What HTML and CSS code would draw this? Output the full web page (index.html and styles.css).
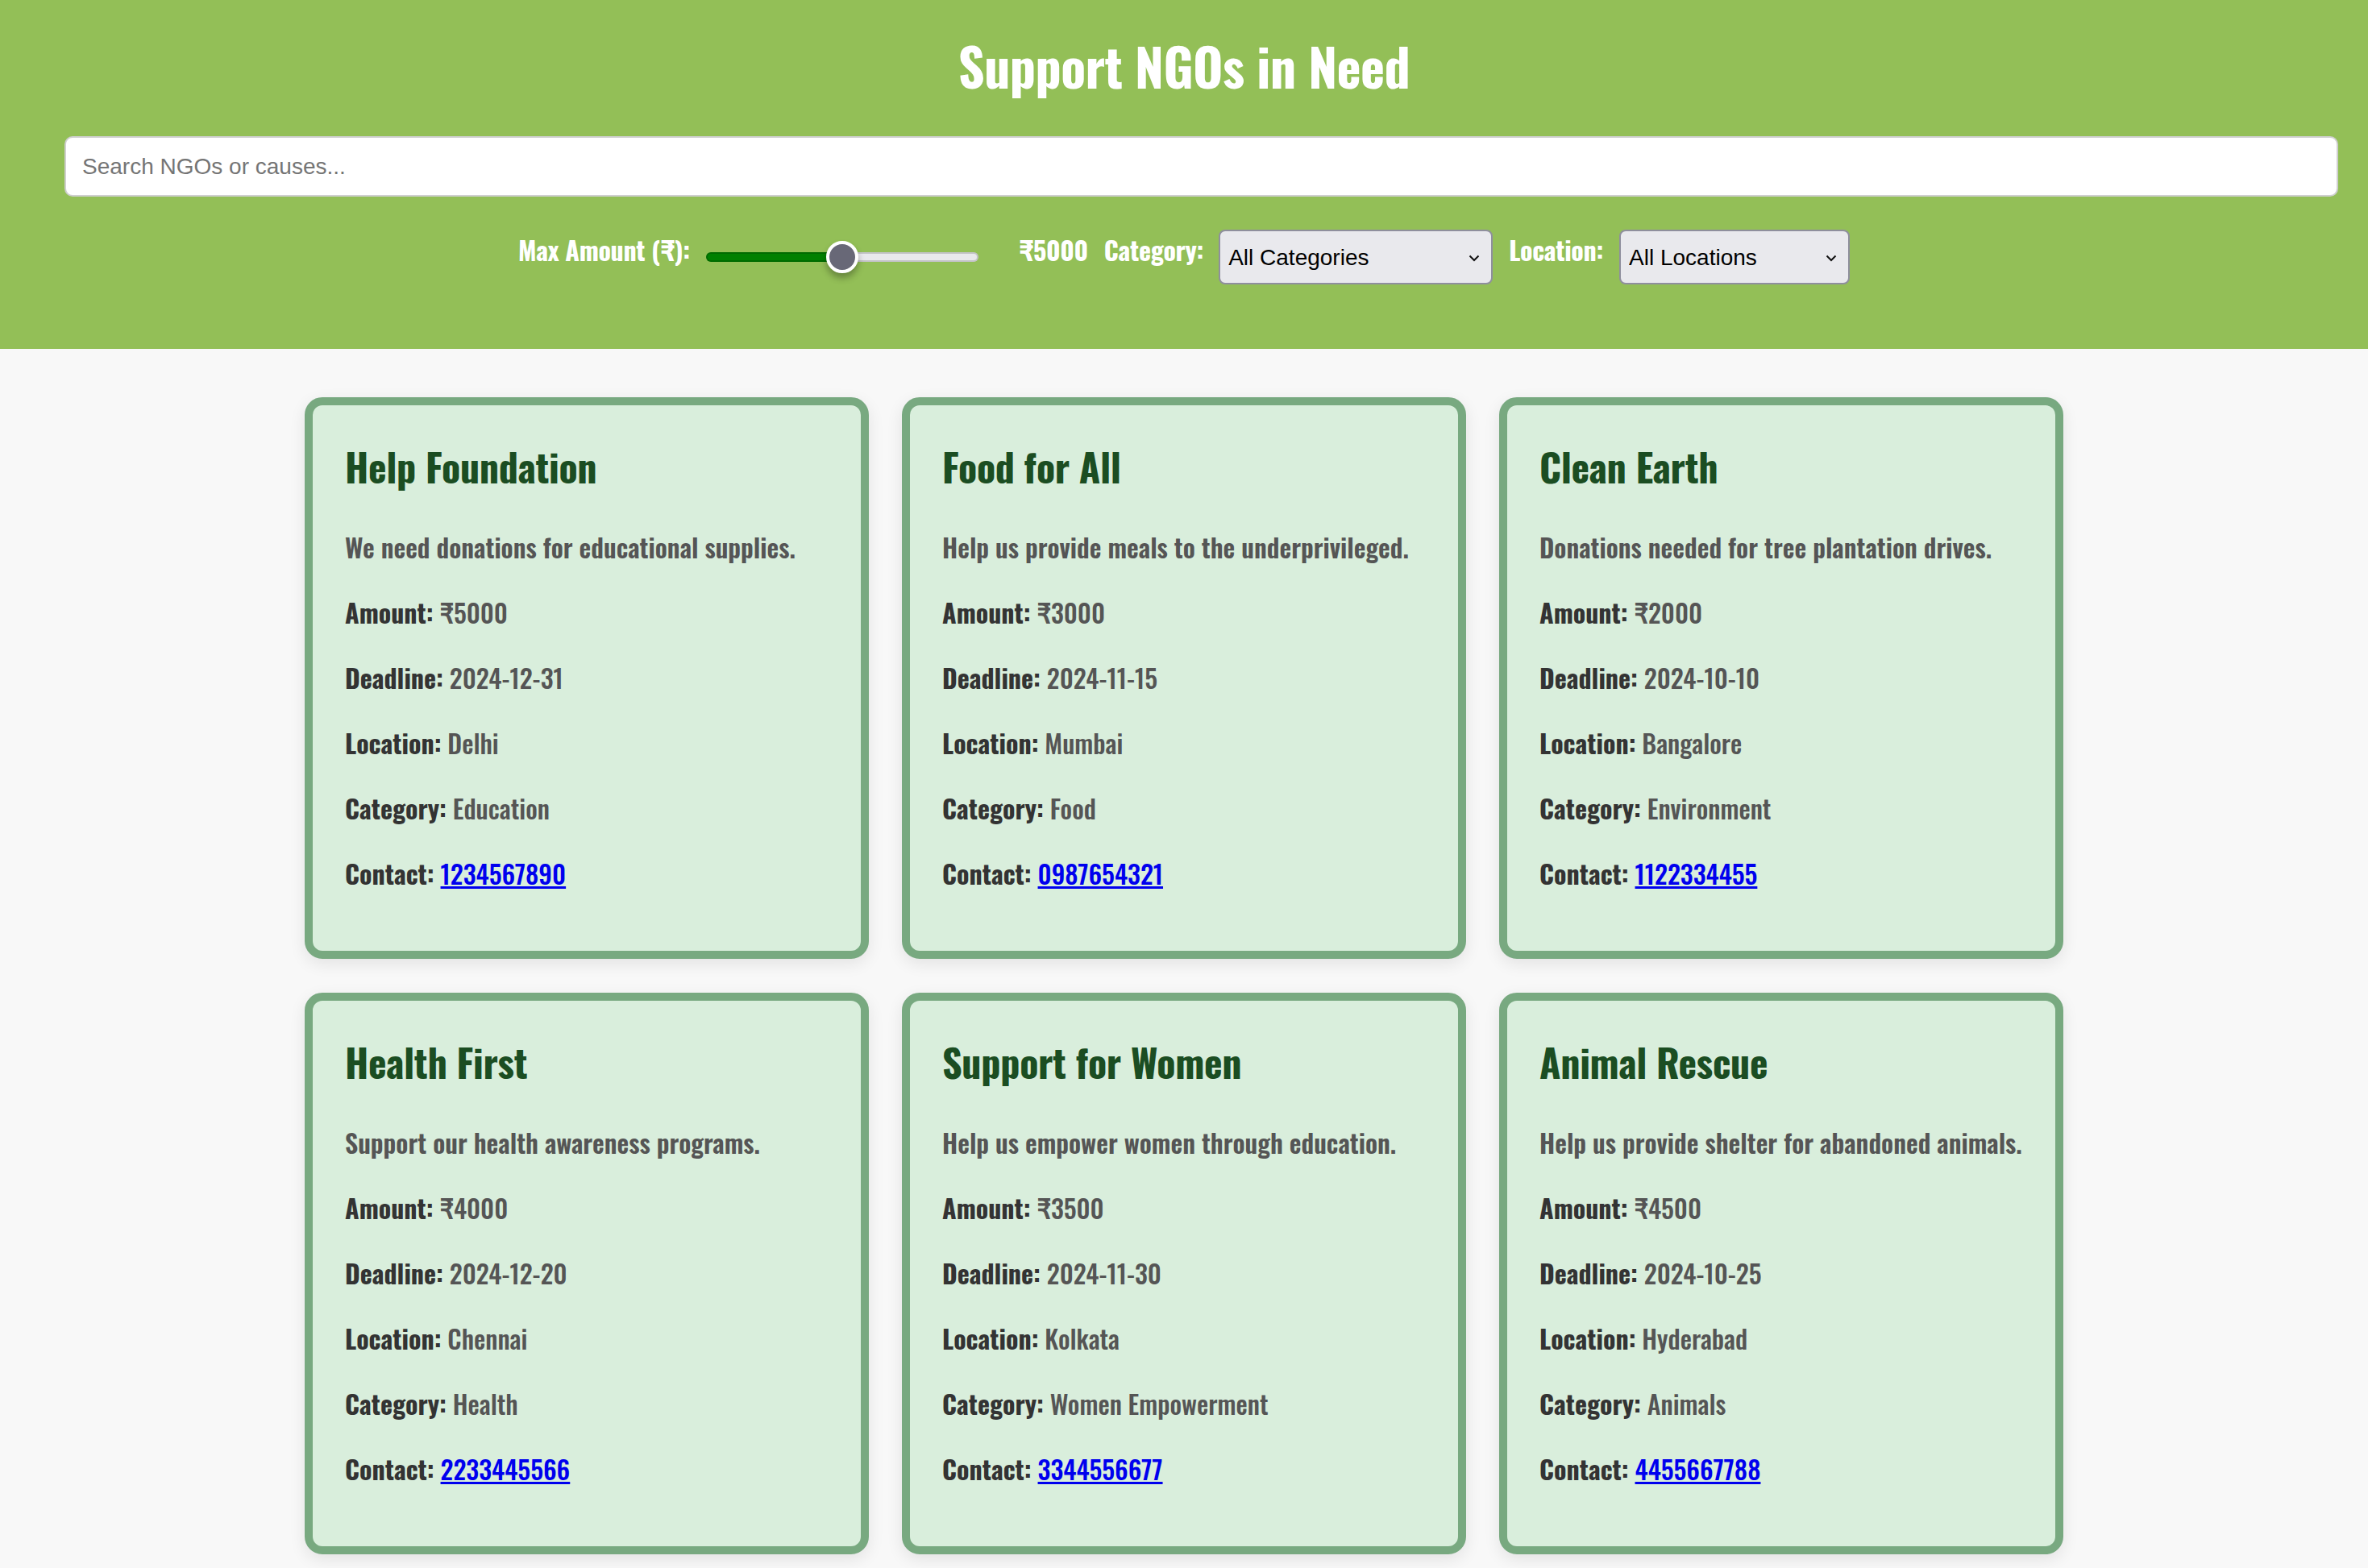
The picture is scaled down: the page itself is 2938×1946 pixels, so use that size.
FILE: index.html
```html
<!DOCTYPE html>
<html lang="en">
<head>
<meta charset="utf-8">
<title>Support NGOs in Need</title>
<link rel="stylesheet" href="styles.css">
</head>
<body>
<header class="header">
  <h1 class="title">Support NGOs in Need</h1>
  <div class="search-wrap">
    <input class="search" type="text" placeholder="Search NGOs or causes...">
  </div>
  <div class="filters">
    <label class="flabel lbl-amount" for="amt">Max Amount (₹):</label>
    <input class="range" id="amt" type="range" min="0" max="10000" value="5000">
    <span class="flabel amt-value">₹5000</span>
    <label class="flabel lbl-cat" for="cat">Category:</label>
    <div class="select-wrap sel-cat">
      <select class="select" id="cat">
        <option>All Categories</option>
        <option>Education</option>
        <option>Food</option>
        <option>Environment</option>
        <option>Health</option>
        <option>Women Empowerment</option>
        <option>Animals</option>
      </select>
      <svg class="chev" width="14" height="9" viewBox="0 0 14 9"><path d="M1.5 1.5 L7 7 L12.5 1.5" fill="none" stroke="#111" stroke-width="2"/></svg>
    </div>
    <label class="flabel lbl-loc" for="loc">Location:</label>
    <div class="select-wrap sel-loc">
      <select class="select" id="loc">
        <option>All Locations</option>
        <option>Delhi</option>
        <option>Mumbai</option>
        <option>Bangalore</option>
        <option>Chennai</option>
        <option>Kolkata</option>
        <option>Hyderabad</option>
      </select>
      <svg class="chev" width="14" height="9" viewBox="0 0 14 9"><path d="M1.5 1.5 L7 7 L12.5 1.5" fill="none" stroke="#111" stroke-width="2"/></svg>
    </div>
  </div>
</header>

<main class="grid">
  <div class="card">
    <h2 class="card-title">Help Foundation</h2>
    <p class="desc">We need donations for educational supplies.</p>
    <p><strong>Amount:</strong> ₹5000</p>
    <p><strong>Deadline:</strong> 2024-12-31</p>
    <p><strong>Location:</strong> Delhi</p>
    <p><strong>Category:</strong> Education</p>
    <p><strong>Contact:</strong> <a href="#">1234567890</a></p>
  </div>
  <div class="card">
    <h2 class="card-title">Food for All</h2>
    <p class="desc">Help us provide meals to the underprivileged.</p>
    <p><strong>Amount:</strong> ₹3000</p>
    <p><strong>Deadline:</strong> 2024-11-15</p>
    <p><strong>Location:</strong> Mumbai</p>
    <p><strong>Category:</strong> Food</p>
    <p><strong>Contact:</strong> <a href="#">0987654321</a></p>
  </div>
  <div class="card">
    <h2 class="card-title">Clean Earth</h2>
    <p class="desc">Donations needed for tree plantation drives.</p>
    <p><strong>Amount:</strong> ₹2000</p>
    <p><strong>Deadline:</strong> 2024-10-10</p>
    <p><strong>Location:</strong> Bangalore</p>
    <p><strong>Category:</strong> Environment</p>
    <p><strong>Contact:</strong> <a href="#">1122334455</a></p>
  </div>
  <div class="card">
    <h2 class="card-title">Health First</h2>
    <p class="desc">Support our health awareness programs.</p>
    <p><strong>Amount:</strong> ₹4000</p>
    <p><strong>Deadline:</strong> 2024-12-20</p>
    <p><strong>Location:</strong> Chennai</p>
    <p><strong>Category:</strong> Health</p>
    <p><strong>Contact:</strong> <a href="#">2233445566</a></p>
  </div>
  <div class="card">
    <h2 class="card-title">Support for Women</h2>
    <p class="desc">Help us empower women through education.</p>
    <p><strong>Amount:</strong> ₹3500</p>
    <p><strong>Deadline:</strong> 2024-11-30</p>
    <p><strong>Location:</strong> Kolkata</p>
    <p><strong>Category:</strong> Women Empowerment</p>
    <p><strong>Contact:</strong> <a href="#">3344556677</a></p>
  </div>
  <div class="card">
    <h2 class="card-title">Animal Rescue</h2>
    <p class="desc">Help us provide shelter for abandoned animals.</p>
    <p><strong>Amount:</strong> ₹4500</p>
    <p><strong>Deadline:</strong> 2024-10-25</p>
    <p><strong>Location:</strong> Hyderabad</p>
    <p><strong>Category:</strong> Animals</p>
    <p><strong>Contact:</strong> <a href="#">4455667788</a></p>
  </div>
</main>
</body>
</html>
```
FILE: styles.css
```css
* { box-sizing: border-box; }

body {
  margin: 0;
  background: #f8f8f8;
  font-family: "Oswald", "Liberation Sans Narrow", "Liberation Sans", sans-serif;
  color: #555;
}

.header {
  background: #93bf57;
  padding: 34px 0 80px;
}

.title {
  margin: 0;
  text-align: center;
  color: #fff;
  font-size: 64px;
  font-weight: 700;
  line-height: 95px;
  letter-spacing: -0.6px;
}

.search-wrap {
  margin-top: 40px;
  padding: 0 37px 0 80px;
}

.search {
  display: block;
  width: 100%;
  height: 75px;
  padding: 0 20px;
  border: 2px solid #cfcfcf;
  border-radius: 10px;
  background: #fff;
  font-family: "Liberation Sans", Arial, sans-serif;
  font-size: 28px;
  color: #222;
  outline: none;
}
.search::placeholder { color: #757575; }

.filters {
  margin-top: 41px;
  display: flex;
  justify-content: center;
  align-items: center;
}

.flabel {
  color: #fff;
  font-size: 32px;
  font-weight: 700;
  line-height: 47px;
  letter-spacing: -0.3px;
  margin-bottom: 20px;
  white-space: nowrap;
}
.lbl-amount { margin-right: 20px; }
.amt-value { margin-right: 20px; }
.lbl-cat { margin-right: 19px; }
.lbl-loc { margin-right: 20px; }

.range {
  -webkit-appearance: none;
  appearance: none;
  width: 338px;
  height: 40px;
  margin: 0 50px 0 0;
  background: transparent;
}
.range::-webkit-slider-runnable-track {
  height: 12px;
  border-radius: 6px;
  background: linear-gradient(to right, #008000 0 50%, #e9e9ed 50% 100%);
  box-shadow: inset 0 0 0 2px rgba(0, 0, 0, 0.16);
}
.range::-webkit-slider-thumb {
  -webkit-appearance: none;
  appearance: none;
  width: 40px;
  height: 40px;
  margin-top: -14px;
  border-radius: 50%;
  background: #686877;
  border: 4px solid #fff;
  box-shadow: 0 6px 8px rgba(0, 0, 0, 0.3);
}

.select-wrap {
  position: relative;
}
.sel-cat { margin-right: 20px; }
.sel-cat .select { width: 340px; }
.sel-loc .select { width: 286px; }

.select {
  -webkit-appearance: none;
  appearance: none;
  display: block;
  height: 68px;
  padding: 0 40px 0 10px;
  background: #e9e9ed;
  border: 2px solid #8f8f9d;
  border-radius: 8px;
  font-family: "Liberation Sans", Arial, sans-serif;
  font-size: 28px;
  color: #000;
}

.chev {
  position: absolute;
  right: 16px;
  top: 31px;
  pointer-events: none;
}

.grid {
  display: grid;
  grid-template-columns: repeat(3, 700px);
  column-gap: 41px;
  row-gap: 42px;
  justify-content: center;
  padding: 60px 0 40px;
}

.card {
  background: #d9eedc;
  border: 10px solid #78a980;
  border-radius: 22px;
  padding: 40px 20px 40px 40px;
  box-shadow: 0 6px 20px rgba(0, 0, 0, 0.09);
}

.card-title {
  margin: 0 0 40px;
  font-size: 48px;
  font-weight: 700;
  line-height: 71px;
  letter-spacing: -0.3px;
  color: #1b4d22;
}

.card p {
  margin: 32px 0;
  font-size: 32px;
  font-weight: 500;
  line-height: 49px;
  color: #555;
}

.card .desc {
  font-weight: 600;
  white-space: nowrap;
}

.card strong {
  font-weight: 700;
  color: #333;
}

.card a {
  color: #0000ee;
  text-decoration: underline;
}
```
